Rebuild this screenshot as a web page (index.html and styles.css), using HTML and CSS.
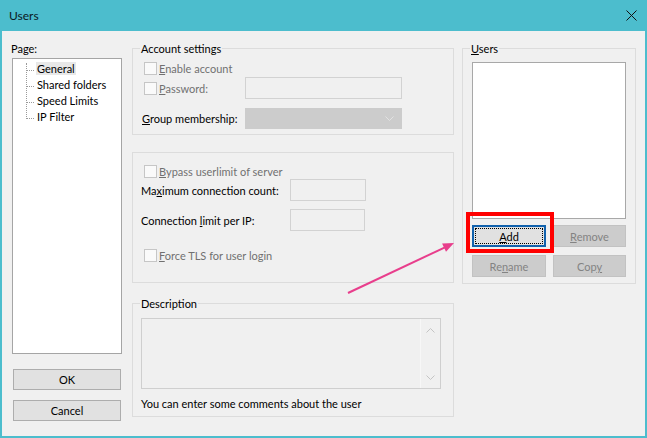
FILE: index.html
```html
<!DOCTYPE html>
<html lang="en">
<head>
  <meta charset="UTF-8">
  <title>Users</title>
  <link rel="stylesheet" href="styles.css">
</head>
<body>
  <div class="window">
    <div class="titlebar">
      <span class="title">Users</span>
      <svg class="close" width="11" height="11" viewBox="0 0 11 11"><path d="M0.5 0.5L10.5 10.5M10.5 0.5L0.5 10.5" stroke="#111" stroke-width="1"/></svg>
    </div>

    <div class="content">
      <div class="left">
        <div class="page-label">Page:</div>
        <div class="tree">
          <div class="tree-list">
            <div class="tree-item"><span class="selected">General</span></div>
            <div class="tree-item"><span>Shared folders</span></div>
            <div class="tree-item"><span>Speed Limits</span></div>
            <div class="tree-item"><span>IP Filter</span></div>
          </div>
        </div>
        <button class="btn ok">OK</button>
        <button class="btn cancel">Cancel</button>
      </div>

      <div class="middle">
        <fieldset class="group account">
          <legend>Account settings</legend>
          <div class="check-row first">
            <span class="cb"></span><span class="dis"><u>E</u>nable account</span>
          </div>
          <div class="field-row pass">
            <div class="field-label"><span class="cb"></span><span class="dis"><u>P</u>assword:</span></div>
            <div class="input wide"></div>
          </div>
          <div class="field-row group-row">
            <div class="field-label plain"><span><u>G</u>roup membership:</span></div>
            <div class="select">
              <svg width="9" height="6" viewBox="0 0 9 6"><path d="M0.5 0.5L4.5 4.5L8.5 0.5" fill="none" stroke="#e2e2e2" stroke-width="1"/></svg>
            </div>
          </div>
        </fieldset>

        <fieldset class="group limits">
          <div class="check-row bypass">
            <span class="cb"></span><span class="dis"><u>B</u>ypass userlimit of server</span>
          </div>
          <div class="field-row">
            <div class="field-label long"><span>Ma<u>x</u>imum connection count:</span></div>
            <div class="input small"></div>
          </div>
          <div class="field-row conn">
            <div class="field-label long"><span>Connection <u>l</u>imit per IP:</span></div>
            <div class="input small"></div>
          </div>
          <div class="check-row tls">
            <span class="cb"></span><span class="dis"><u>F</u>orce TLS for user login</span>
          </div>
        </fieldset>

        <fieldset class="group description">
          <legend>Description</legend>
          <div class="memo">
            <div class="memo-text"></div>
            <div class="memo-scroll">
              <svg width="9" height="6" viewBox="0 0 9 6"><path d="M0.5 5.5L4.5 1.5L8.5 5.5" fill="none" stroke="#c4c4c4" stroke-width="1"/></svg>
              <svg width="9" height="6" viewBox="0 0 9 6"><path d="M0.5 0.5L4.5 4.5L8.5 0.5" fill="none" stroke="#c4c4c4" stroke-width="1"/></svg>
            </div>
          </div>
          <div class="hint">You can enter some comments about the user</div>
        </fieldset>
      </div>

      <div class="right">
        <fieldset class="group users">
          <legend><u>U</u>sers</legend>
          <div class="listbox"></div>
          <div class="user-buttons">
            <button class="btn add"><u>A</u>dd</button>
            <button class="btn disabled"><u>R</u>emove</button>
            <button class="btn disabled">Re<u>n</u>ame</button>
            <button class="btn disabled">Cop<u>y</u></button>
          </div>
        </fieldset>
      </div>
    </div>

    <div class="highlight"></div>
    <svg class="arrow" width="647" height="438" viewBox="0 0 647 438">
      <line x1="348" y1="293" x2="445" y2="247.3" stroke="#e83e8c" stroke-width="2"/>
      <polygon points="454,243 446,251.8 442.1,243.6" fill="#e83e8c"/>
    </svg>
  </div>
</body>
</html>
```

FILE: styles.css
```css
body {
  margin: 0;
  font-family: Lato, "Noto Sans", sans-serif;
  font-size: 11px;
  color: #000;
  background: #fff;
}
.window {
  position: relative;
  width: 647px;
  height: 438px;
  box-sizing: border-box;
  background: #4cbdcd;
  border: 2px solid #4cbdcd;
  border-top: none;
  display: flex;
  flex-direction: column;
}
.titlebar {
  height: 31px;
  display: flex;
  align-items: center;
  justify-content: space-between;
  padding: 0 8px 0 7px;
}
.title {
  font-size: 12px;
  color: #0b1a24;
}
.content {
  flex: 1;
  background: #f0f0f0;
  display: flex;
  padding: 10px 0 0 10px;
  line-height: 15px;
}
.left {
  width: 110px;
  display: flex;
  flex-direction: column;
}
.page-label {
  margin-left: -1px;
  height: 15px;
}
.tree {
  margin-top: 2px;
  width: 110px;
  height: 296px;
  box-sizing: border-box;
  background: #fff;
  border: 1px solid #a5a5a5;
  padding: 2px 0 0 13px;
}
.tree-list {
  position: relative;
}
.tree-list::before {
  content: "";
  position: absolute;
  left: 0;
  top: 2px;
  bottom: 8px;
  border-left: 1px dotted #9a9a9a;
}
.tree-item {
  height: 16px;
  line-height: 16px;
  white-space: nowrap;
}
.tree-item::before {
  content: "";
  display: inline-block;
  width: 8px;
  border-top: 1px dotted #9a9a9a;
  vertical-align: middle;
  margin-right: 2px;
}
.tree-item span {
  padding: 0 1px;
}
.tree-item .selected {
  background: #e8e8e8;
}
.btn {
  font-family: inherit;
  font-size: 11px;
  height: 21px;
  padding: 0;
  background: #e1e1e1;
  border: 1px solid #adadad;
  color: #000;
}
.ok {
  margin-top: 15px;
  width: 108px;
  margin-left: 1px;
}
.cancel {
  margin-top: 10px;
  width: 108px;
  margin-left: 1px;
}
.middle {
  width: 322px;
  margin-left: 10px;
}
.right {
  width: 174px;
  margin-left: 8px;
}
.group {
  margin: 0;
  border: 1px solid #dcdcdc;
  min-width: 0;
  box-sizing: border-box;
}
.group legend {
  padding: 0 1px;
  margin-left: -1px;
  line-height: 15px;
}
.account {
  padding: 3px 8px 5px 8px;
}
.check-row {
  display: flex;
  align-items: center;
  height: 18px;
}
.cb {
  display: inline-block;
  width: 11px;
  height: 11px;
  border: 1px solid #c6c6c6;
  background: #fafafa;
  margin-left: 3px;
  margin-right: 2px;
  flex: none;
}
.dis {
  color: #707070;
}
.field-row {
  display: flex;
  align-items: center;
  height: 22px;
}
.field-label {
  width: 104px;
  display: flex;
  align-items: center;
  flex: none;
  white-space: nowrap;
}
.field-label.plain {
  margin-left: 1px;
  width: 103px;
}
.field-label.long {
  width: 149px;
}
.input {
  height: 22px;
  box-sizing: border-box;
  border: 1px solid #d2d2d2;
  background: #f0f0f0;
}
.input.wide {
  width: 157px;
}
.input.small {
  width: 76px;
}
.group-row {
  margin-top: 9px;
  height: 21px;
}
.select {
  width: 157px;
  height: 21px;
  box-sizing: border-box;
  background: #cccccc;
  border: 1px solid #cccccc;
  display: flex;
  align-items: center;
  justify-content: flex-end;
  padding-right: 7px;
}
.limits {
  margin-top: 17px;
  height: 131px;
  padding: 10px 8px 0 8px;
}
.bypass {
  height: 16px;
}
.conn {
  margin-top: 8px;
}
.conn .input.small {
  width: 75px;
}
.tls {
  margin-top: 15px;
}
.description {
  margin-top: 13px;
  padding: 7px 8px 5px 8px;
}
.memo {
  width: 300px;
  height: 71px;
  box-sizing: border-box;
  border: 1px solid #cfcfcf;
  background: #f0f0f0;
  display: flex;
}
.memo-text {
  flex: 1;
}
.memo-scroll {
  width: 19px;
  border-left: 1px solid #f7f7f7;
  display: flex;
  flex-direction: column;
  justify-content: space-between;
  align-items: center;
  padding: 8px 0 7px 0;
}
.hint {
  margin-top: 7px;
}
.users {
  height: 243px;
  padding: 6px 9px 0 9px;
}
.users legend {
  margin-left: -2px;
}
.listbox {
  width: 154px;
  height: 157px;
  box-sizing: border-box;
  border: 1px solid #a8a8a8;
  background: #fff;
}
.user-buttons {
  margin-top: 6px;
  display: grid;
  grid-template-columns: 74px 73px;
  column-gap: 7px;
  row-gap: 8px;
}
.user-buttons .btn {
  height: 22px;
}
.btn.disabled {
  background: #cccccc;
  border-color: #c2c2c2;
  color: #838383;
}
.btn.add {
  border: 2px solid #1262ad;
  outline: 1px dotted #000;
  outline-offset: -4px;
  background: #e1e1e1;
}
.highlight {
  position: absolute;
  left: 464px;
  top: 212px;
  width: 80px;
  height: 33px;
  border: 4px solid #f00;
}
.arrow {
  position: absolute;
  left: -2px;
  top: 0;
  pointer-events: none;
}
```
